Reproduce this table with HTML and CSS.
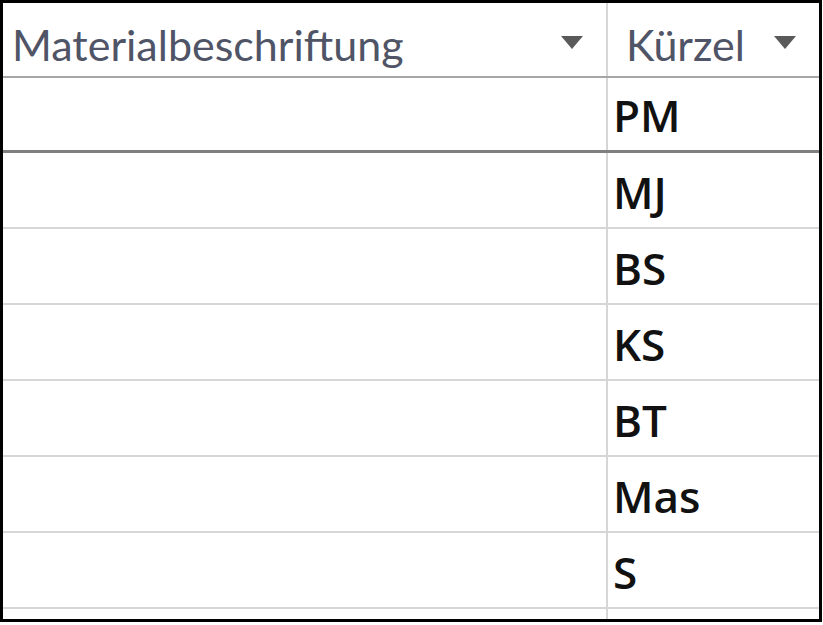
FILE: index.html
```html
<!DOCTYPE html>
<html lang="de">
<head>
<meta charset="utf-8">
<title>Tabelle</title>
<link rel="stylesheet" href="styles.css">
</head>
<body>
<div class="frame">
  <div class="row header">
    <div class="cell c1"><span class="htext">Materialbeschriftung</span><span class="arrow"></span></div>
    <div class="cell c2"><span class="htext">Kürzel</span><span class="arrow"></span></div>
  </div>
  <div class="row first">
    <div class="cell c1"></div>
    <div class="cell c2"><span class="dtext">PM</span></div>
  </div>
  <div class="row">
    <div class="cell c1"></div>
    <div class="cell c2"><span class="dtext">MJ</span></div>
  </div>
  <div class="row">
    <div class="cell c1"></div>
    <div class="cell c2"><span class="dtext">BS</span></div>
  </div>
  <div class="row">
    <div class="cell c1"></div>
    <div class="cell c2"><span class="dtext">KS</span></div>
  </div>
  <div class="row">
    <div class="cell c1"></div>
    <div class="cell c2"><span class="dtext">BT</span></div>
  </div>
  <div class="row">
    <div class="cell c1"></div>
    <div class="cell c2"><span class="dtext">Mas</span></div>
  </div>
  <div class="row">
    <div class="cell c1"></div>
    <div class="cell c2"><span class="dtext">S</span></div>
  </div>
  <div class="row last">
    <div class="cell c1"></div>
    <div class="cell c2"></div>
  </div>
</div>
</body>
</html>
```
FILE: styles.css
```css
html, body {
  margin: 0;
  padding: 0;
  background: #ffffff;
}
.frame {
  box-sizing: border-box;
  width: 822px;
  height: 622px;
  border: 3px solid #000;
  background: #fff;
  overflow: hidden;
  display: flex;
  flex-direction: column;
  font-family: Lato, "Open Sans", sans-serif;
}
.row {
  display: flex;
  flex: none;
  height: 74px;
  border-bottom: 2px solid #d6d6d6;
}
.row.header {
  height: 73px;
  border-bottom: 2px solid #a6a6a6;
}
.row.first {
  height: 72px;
  border-bottom: 3px solid #7f7f7f;
}
.row.last {
  border-bottom: none;
}
.cell {
  box-sizing: border-box;
  display: flex;
  align-items: flex-end;
}
.c1 {
  width: 605px;
  border-right: 2px solid #d6d6d6;
  padding-left: 9px;
}
.c2 {
  flex: 1;
  padding-left: 5px;
}
.header .cell {
  padding-bottom: 10px;
}
.header .c2 {
  padding-left: 18px;
}
.htext {
  font-size: 43px;
  line-height: 1;
  color: #4f5466;
  flex: 1;
}
.arrow {
  width: 0;
  height: 0;
  border-left: 11px solid transparent;
  border-right: 11px solid transparent;
  border-top: 13px solid #5a5a5a;
  align-self: flex-start;
  margin-top: 33px;
  margin-right: 23px;
}
.dtext {
  font-family: "Open Sans", Lato, sans-serif;
  font-size: 44px;
  line-height: 1;
  font-weight: 600;
  color: #111;
  padding-bottom: 13px;
}
```
